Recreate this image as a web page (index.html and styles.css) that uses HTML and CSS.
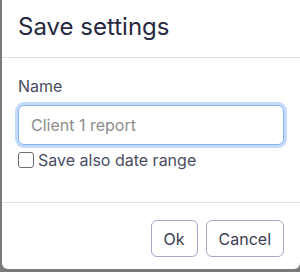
FILE: index.html
```html
<!DOCTYPE html>
<html>
<head>
<meta charset="utf-8">
<link rel="stylesheet" href="styles.css">
</head>
<body>
<div class="modal">
  <div class="modal-header">
    <h2 class="modal-title">Save settings</h2>
  </div>
  <div class="modal-body">
    <label class="field-label" for="name">Name</label>
    <input class="field-input" id="name" type="text" placeholder="Client 1 report">
    <label class="check-row">
      <input class="check-box" type="checkbox">
      <span>Save also date range</span>
    </label>
  </div>
  <div class="modal-footer">
    <button class="btn">Ok</button>
    <button class="btn">Cancel</button>
  </div>
</div>
</body>
</html>
```
FILE: styles.css
```css
html, body {
  margin: 0;
  padding: 0;
}
body {
  background: #7a7a7a;
  width: 300px;
  height: 272px;
  overflow: hidden;
  font-family: Inter, "Noto Sans", sans-serif;
}
.modal {
  margin-left: 2px;
  width: 298px;
  height: 269px;
  background: #fff;
  border-radius: 0 0 6px 6px;
  display: flex;
  flex-direction: column;
  box-sizing: border-box;
}
.modal-header {
  padding: 14px 16px 17px;
  border-bottom: 1px solid #e2e2e2;
}
.modal-title {
  margin: 0;
  font-size: 24px;
  line-height: 26px;
  font-weight: 400;
  color: #262840;
}
.modal-body {
  padding: 18px 16px 0;
  height: 126px;
  display: flex;
  flex-direction: column;
  border-bottom: 1px solid #e2e2e2;
}
.field-label {
  font-size: 16px;
  line-height: 20px;
  color: #4a4c62;
}
.field-input {
  margin-top: 9px;
  height: 40px;
  box-sizing: border-box;
  border: 1px solid #86b3f5;
  border-radius: 6px;
  box-shadow: 0 0 0 3px #c4dbfc;
  padding: 0 12px;
  font-family: Inter, "Noto Sans", sans-serif;
  font-size: 16px;
  color: #333;
  outline: none;
}
.field-input::placeholder {
  color: #8c8c8c;
}
.check-row {
  margin-top: 7px;
  display: flex;
  align-items: center;
  gap: 4px;
  font-size: 16px;
  line-height: 16px;
  color: #4a4c62;
}
.check-box {
  appearance: none;
  -webkit-appearance: none;
  margin: 0;
  width: 16px;
  height: 16px;
  border: 1px solid #6d6d6d;
  border-radius: 3px;
  box-sizing: border-box;
  background: #fff;
}
.modal-footer {
  padding: 17px 16px 0;
  display: flex;
  justify-content: flex-end;
  gap: 8px;
}
.btn {
  height: 37px;
  padding: 0 12px;
  background: #fff;
  border: 1px solid #a4a7cd;
  border-radius: 6px;
  font-family: Inter, "Noto Sans", sans-serif;
  font-size: 16px;
  color: #3b3d55;
}
```
